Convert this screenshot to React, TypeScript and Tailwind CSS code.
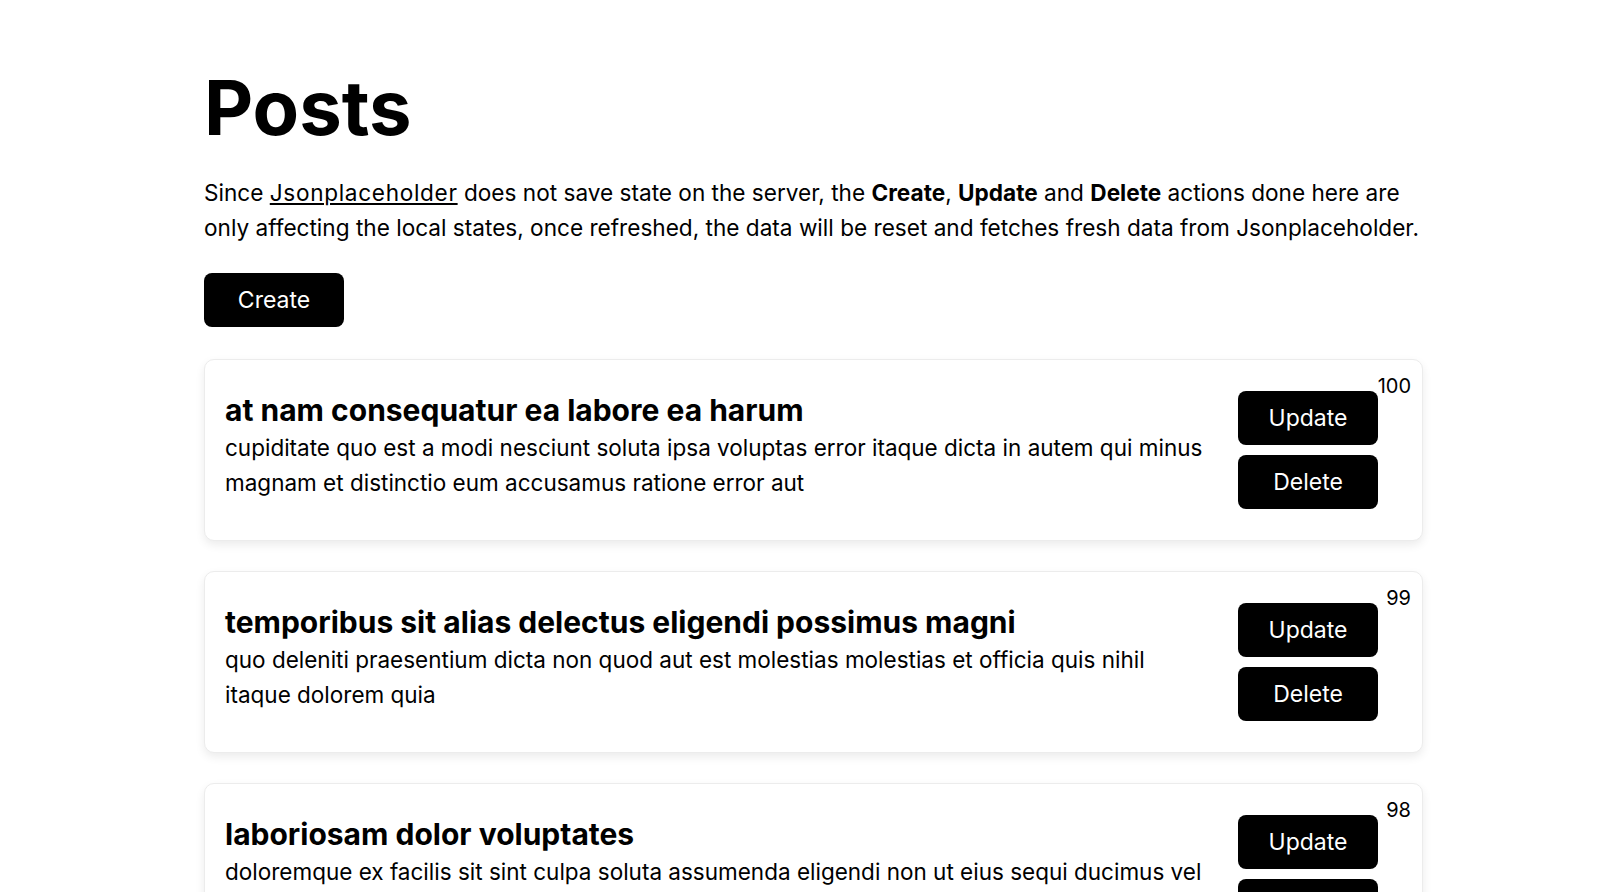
import React, { useState } from "react";

type Post = { id: number; title: string; body: string };

const POSTS: Post[] = [
  {
    id: 100,
    title: "at nam consequatur ea labore ea harum",
    body: "cupiditate quo est a modi nesciunt soluta ipsa voluptas error itaque dicta in autem qui minus magnam et distinctio eum accusamus ratione error aut",
  },
  {
    id: 99,
    title: "temporibus sit alias delectus eligendi possimus magni",
    body: "quo deleniti praesentium dicta non quod aut est molestias molestias et officia quis nihil itaque dolorem quia",
  },
  {
    id: 98,
    title: "laboriosam dolor voluptates",
    body: "doloremque ex facilis sit sint culpa soluta assumenda eligendi non ut eius sequi ducimus vel quasi veritatis est dolores",
  },
];

function PostCard({ post, onDelete }: { post: Post; onDelete: (id: number) => void }) {
  return (
    <div className="relative flex items-center justify-between gap-6 rounded-[10px] border border-[#ececec] bg-white px-5 py-[30px] pr-11 shadow-[0_4px_10px_rgba(0,0,0,0.08)]">
      <span className="absolute right-[11px] top-[14px] text-[20px] leading-6">{post.id}</span>
      <div className="flex-1 pb-[10px]">
        <h2 className="text-[30px] font-bold leading-[40px]">{post.title}</h2>
        <p className="text-[22.5px] leading-[35px]">{post.body}</p>
      </div>
      <div className="flex flex-col gap-[10px]">
        <button className="h-[54px] w-[140px] rounded-lg bg-black text-[23px] text-white">Update</button>
        <button
          onClick={() => onDelete(post.id)}
          className="h-[54px] w-[140px] rounded-lg bg-black text-[23px] text-white"
        >
          Delete
        </button>
      </div>
    </div>
  );
}

export default function App() {
  const [posts, setPosts] = useState(POSTS);

  return (
    <div className="min-h-screen bg-white font-['Inter',sans-serif] text-black">
      <div className="ml-[204px] w-[1219px] pt-[62px] pb-10">
        <h1 className="text-[76px] font-bold leading-[91px]">Posts</h1>
        <p className="mt-[22px] w-[1230px] text-[22.6px] leading-[35px]">
          Since{" "}
          <a href="#" className="tracking-[0.03em] underline">
            Jsonplaceholder
          </a>{" "}
          does not save state on the server, the <b>Create</b>, <b>Update</b> and <b>Delete</b> actions done here are
          only affecting the local states, once refreshed, the data will be reset and fetches fresh data from
          Jsonplaceholder.
        </p>
        <button className="mt-[28px] h-[54px] w-[140px] rounded-lg bg-black text-[23px] text-white">Create</button>
        <div className="mt-8 flex flex-col gap-[30px]">
          {posts.map((p) => (
            <PostCard key={p.id} post={p} onDelete={(id) => setPosts(posts.filter((x) => x.id !== id))} />
          ))}
        </div>
      </div>
    </div>
  );
}
